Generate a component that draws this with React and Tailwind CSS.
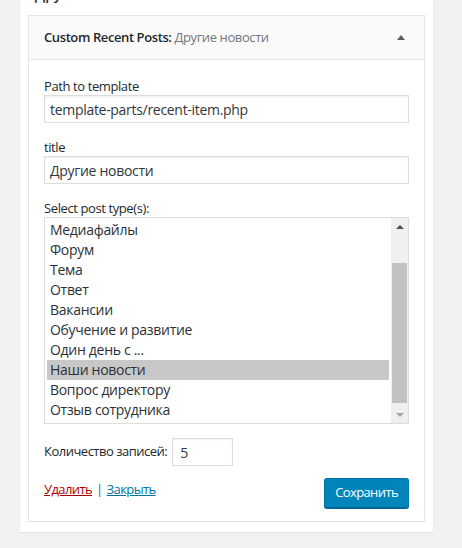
import React from "react";

const postTypes = [
  "Медиафайлы",
  "Форум",
  "Тема",
  "Ответ",
  "Вакансии",
  "Обучение и развитие",
  "Один день с ...",
  "Наши новости",
  "Вопрос директору",
  "Отзыв сотрудника",
];

const font = { fontFamily: '"Open Sans", "Noto Sans", sans-serif' };

const App = () => {
  return (
    <div
      className="w-[462px] h-[548px] overflow-hidden bg-[#f1f1f1] pl-5 text-[#23282d]"
      style={font}
    >
      <div className="w-[413px] bg-white shadow-[0_1px_1px_rgba(0,0,0,0.06)] px-2 pb-[10px]">
        <div className="-mt-[15px] h-[19px] leading-[19px] pl-[7px] text-[14px] font-semibold">
          Другие
        </div>
        <div className="mt-[11px] border border-[#e5e5e5] bg-white">
          <div className="h-[44px] bg-[#fafafa] border-b border-[#e5e5e5] flex items-center justify-between pl-[15px] pr-[19px]">
            <h3 className="text-[13px] tracking-[-0.4px]">
              <span className="font-semibold">Custom Recent Posts:</span>{" "}
              <span className="text-[#72777c]">Другие новости</span>
            </h3>
            <span className="w-0 h-0 border-l-[4px] border-r-[4px] border-b-[5px] border-l-transparent border-r-transparent border-b-[#555d66]"></span>
          </div>

          <div className="px-[15px] pt-[17px] pb-[13px] text-[13px] tracking-[-0.4px]">
            <label className="block leading-[18px]">Path to template</label>
            <div className="h-[28px] border border-[#ddd] shadow-[inset_0_1px_2px_rgba(0,0,0,0.07)] px-[5px] flex items-center text-[14px] tracking-[-0.3px] text-[#32373c]">
              template-parts/recent-item.php
            </div>

            <label className="block leading-[18px] mt-[15px]">title</label>
            <div className="h-[28px] border border-[#ddd] shadow-[inset_0_1px_2px_rgba(0,0,0,0.07)] px-[5px] flex items-center text-[14px] tracking-[-0.3px] text-[#32373c]">
              Другие новости
            </div>

            <label className="block leading-[17px] mt-[16px]">Select post type(s):</label>
            <div className="h-[207px] border border-[#ddd] flex text-[14px] tracking-[-0.3px] text-[#2c3136]">
              <div className="flex-1 p-[2px]">
                {postTypes.map((t) => (
                  <div
                    key={t}
                    className={`h-[20px] leading-[20px] px-[3px] ${
                      t === "Наши новости" ? "bg-[#c8c8c8]" : ""
                    }`}
                  >
                    {t}
                  </div>
                ))}
              </div>
              <div className="w-[17px] bg-[#f0f0f0] flex flex-col items-center">
                <div className="h-[17px] flex items-center justify-center">
                  <span className="w-0 h-0 border-l-[4px] border-r-[4px] border-b-[4px] border-l-transparent border-r-transparent border-b-[#505050]"></span>
                </div>
                <div className="flex-1 w-full px-[1px] pt-[28px] pb-[1px]">
                  <div className="w-full h-[140px] bg-[#c1c1c1]"></div>
                </div>
                <div className="h-[17px] flex items-center justify-center">
                  <span className="w-0 h-0 border-l-[4px] border-r-[4px] border-t-[4px] border-l-transparent border-r-transparent border-t-[#a3a3a3]"></span>
                </div>
              </div>
            </div>

            <div className="flex items-center mt-[14px]">
              <span className="tracking-[-0.5px]">Количество записей:</span>
              <div className="ml-[5px] w-[61px] h-[28px] border border-[#ddd] shadow-[inset_0_1px_2px_rgba(0,0,0,0.07)] px-[7px] flex items-center text-[14px] text-[#32373c]">
                5
              </div>
            </div>

            <div className="flex justify-between items-start mt-[12px]">
              <div className="pt-[2px] tracking-[-0.6px]">
                <a href="#" className="text-[#a00] underline">
                  Удалить
                </a>
                <span className="text-[#0073aa] mx-[4px]">|</span>
                <a href="#" className="text-[#0073aa] underline">
                  Закрыть
                </a>
              </div>
              <button className="h-[30px] px-[10px] bg-[#0085ba] border border-[#0073aa] border-b-[#006799] rounded-[3px] shadow-[0_1px_0_#006799] text-white text-[13px] tracking-[-0.6px]">
                Сохранить
              </button>
            </div>
          </div>
        </div>
      </div>
    </div>
  );
};

export default App;
